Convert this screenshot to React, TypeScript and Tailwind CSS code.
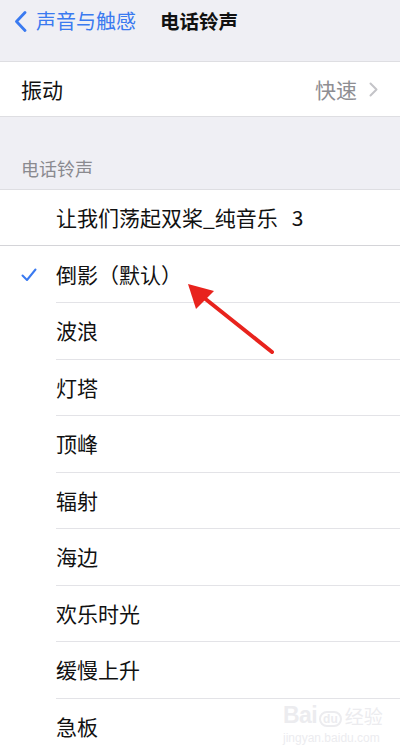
const ringtones = [
  "波浪",
  "灯塔",
  "顶峰",
  "辐射",
  "海边",
  "欢乐时光",
  "缓慢上升",
  "急板",
];

const font = { fontFamily: '"Noto Sans CJK SC", "Noto Sans", sans-serif' };

const App = () => {
  return (
    <div
      className="relative w-[400px] h-[753px] overflow-hidden bg-[#efeff4] text-[#111111]"
      style={font}
    >
      {/* Nav bar */}
      <div className="flex items-center h-[42px] pl-[14px]">
        <svg width="13" height="21" viewBox="0 0 13 21" className="shrink-0">
          <path
            d="M11 1.5 L2.5 10.5 L11 19.5"
            fill="none"
            stroke="#3a7af0"
            strokeWidth="2.8"
            strokeLinecap="round"
            strokeLinejoin="round"
          />
        </svg>
        <span className="ml-[9px] text-[20px] leading-none text-[#3a7af0]">
          声音与触感
        </span>
        <span className="ml-[24px] text-[19.5px] leading-none font-bold">
          电话铃声
        </span>
      </div>

      {/* Vibration group */}
      <div className="mt-[19px] h-[56px] bg-white border-y border-[#dedee2] flex items-center pl-[21px] pr-[22px]">
        <span className="text-[21px] leading-none">振动</span>
        <span className="ml-auto text-[21px] leading-none text-[#8e8e93]">
          快速
        </span>
        <svg width="9" height="15" viewBox="0 0 9 15" className="ml-[12px]">
          <path
            d="M1.5 1.5 L7.5 7.5 L1.5 13.5"
            fill="none"
            stroke="#c4c4c8"
            strokeWidth="2"
            strokeLinecap="round"
            strokeLinejoin="round"
          />
        </svg>
      </div>

      {/* Section header */}
      <div className="h-[72px] flex items-end pl-[21px] pb-[12px]">
        <span className="text-[18px] leading-none text-[#8a8a8f]">
          电话铃声
        </span>
      </div>

      {/* Ringtone list */}
      <div className="bg-white border-t border-[#dedee2]">
        <div className="h-[56px] flex items-center pl-[56px] border-b border-[#d4d4d8] text-[21px] leading-none">
          让我们荡起双桨_纯音乐<span className="ml-[14px]">3</span>
        </div>
        <div className="h-[57px] flex items-center">
          <div className="w-[56px] flex justify-center pl-[14px] pr-[12px] shrink-0">
            <svg width="16" height="14" viewBox="0 0 16 14">
              <path
                d="M1.5 7.5 L6 12 L14.5 1.5"
                fill="none"
                stroke="#3a7af0"
                strokeWidth="2"
                strokeLinecap="round"
                strokeLinejoin="round"
              />
            </svg>
          </div>
          <div className="flex-1 h-full flex items-center border-b border-[#e3e3e7] text-[21px] leading-none">
            倒影（默认）
          </div>
        </div>
        {ringtones.map((name) => (
          <div key={name} className="h-[56.5px] pl-[56px]">
            <div className="h-full flex items-center border-b border-[#e3e3e7] text-[21px] leading-none">
              {name}
            </div>
          </div>
        ))}
      </div>

      {/* Red annotation arrow */}
      <svg
        className="absolute left-0 top-0 pointer-events-none"
        width="400"
        height="753"
        viewBox="0 0 400 753"
      >
        <line
          x1="272"
          y1="352"
          x2="203"
          y2="297"
          stroke="#e8231d"
          strokeWidth="4"
          strokeLinecap="round"
        />
        <polygon points="188,284 214,291 196,309" fill="#e8231d" />
      </svg>

      {/* Watermark */}
      <div
        className="absolute left-[283px] top-[704px] text-[#ececef] pointer-events-none"
        style={{ fontFamily: '"Liberation Sans", "Noto Sans CJK SC", sans-serif' }}
      >
        <div className="flex items-end leading-none">
          <span className="text-[23px] font-bold tracking-tight">Bai</span>
          <span className="ml-[2px] px-[2px] rounded-full border-2 border-[#ececef] text-[12px] font-bold">
            du
          </span>
          <span className="ml-[3px] text-[19px]">经验</span>
        </div>
        <div className="text-[12px] leading-none mt-[5px]">jingyan.baidu.com</div>
      </div>
    </div>
  );
};

export default App;
